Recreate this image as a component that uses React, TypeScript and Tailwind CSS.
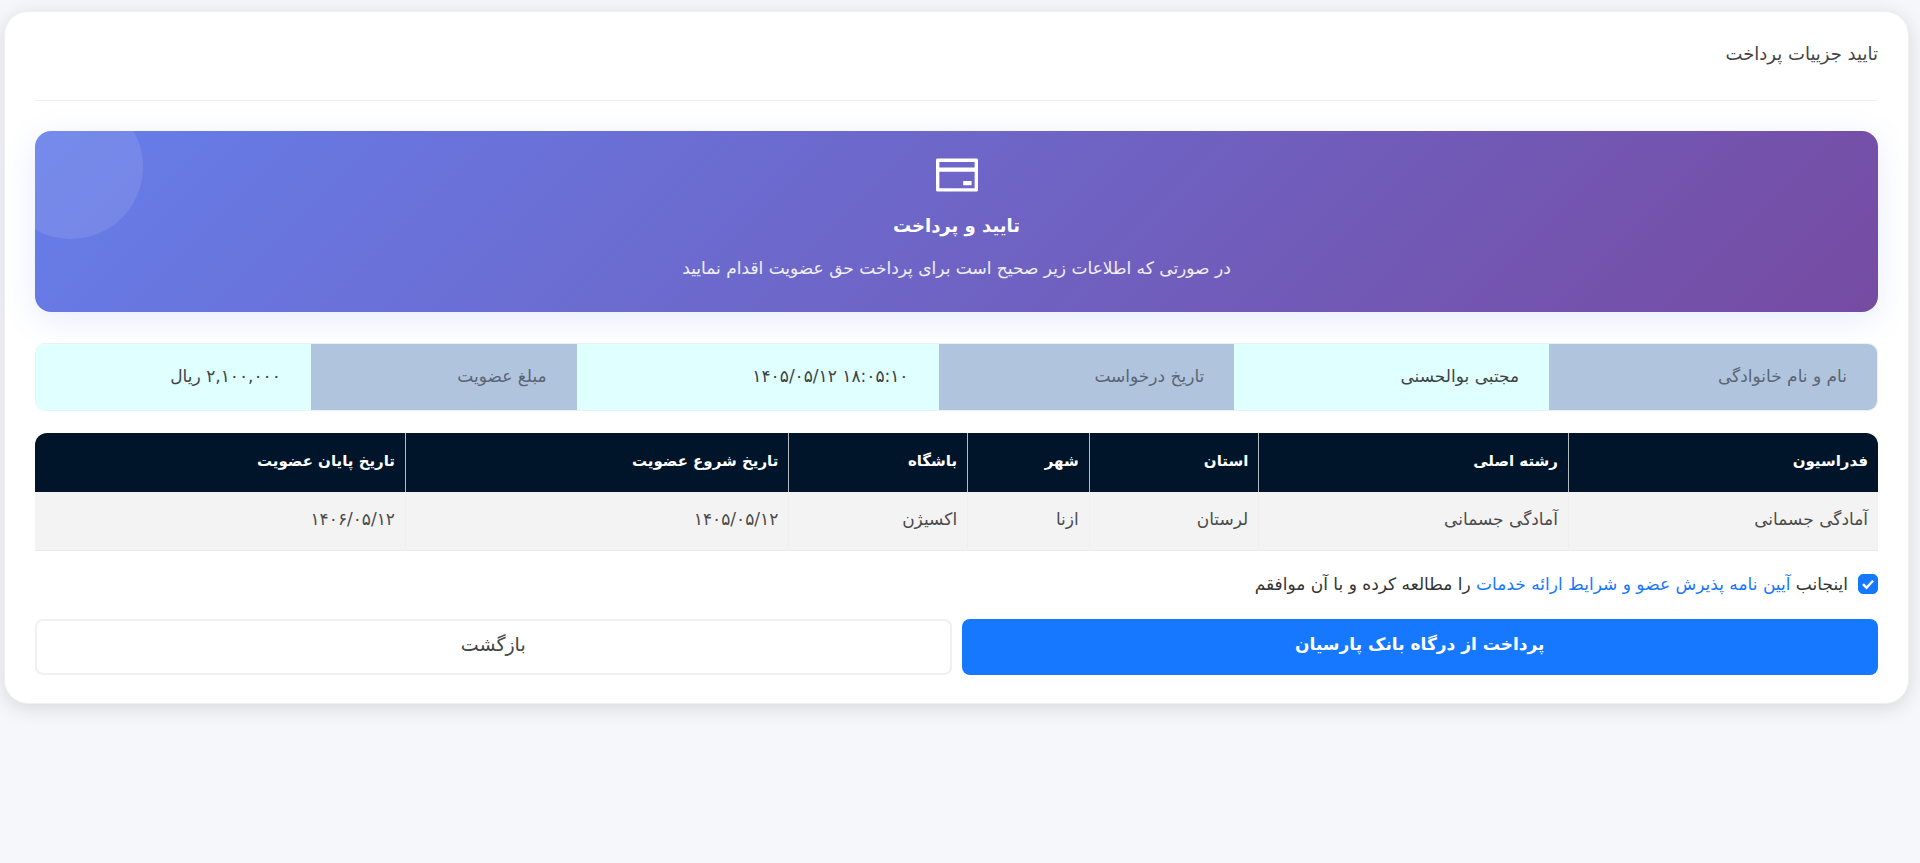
import { AiOutlineCreditCard } from "react-icons/ai";

const details = [
  { label: "نام و نام خانوادگی", value: "مجتبی بوالحسنی" },
  { label: "تاریخ درخواست", value: "۱۴۰۵/۰۵/۱۲ ۱۸:۰۵:۱۰", ltr: true },
  { label: "مبلغ عضویت", value: "۲,۱۰۰,۰۰۰ ریال" },
];

const columns = [
  { title: "فدراسیون", value: "آمادگی جسمانی", width: "w-[16.8%]" },
  { title: "رشته اصلی", value: "آمادگی جسمانی", width: "w-[16.8%]" },
  { title: "استان", value: "لرستان", width: "w-[9.2%]" },
  { title: "شهر", value: "ازنا", width: "w-[6.6%]" },
  { title: "باشگاه", value: "اکسیژن", width: "w-[9.7%]" },
  { title: "تاریخ شروع عضویت", value: "۱۴۰۵/۰۵/۱۲", width: "w-[20.8%]" },
  { title: "تاریخ پایان عضویت", value: "۱۴۰۶/۰۵/۱۲", width: "w-[20.1%]" },
];

function Banner() {
  return (
    <section className="relative flex flex-col items-center overflow-hidden rounded-2xl bg-[linear-gradient(135deg,#667eea_0%,#764ba2_100%)] px-6 pt-5 pb-7 text-white">
      <span className="absolute -top-9 -left-9 size-36 rounded-full bg-white/10" />
      <AiOutlineCreditCard className="size-12" />
      <h2 className="mt-[11px] text-lg leading-8 font-bold">تایید و پرداخت</h2>
      <p className="mt-[10px] text-[17px] leading-8 text-white/90">
        در صورتی که اطلاعات زیر صحیح است برای پرداخت حق عضویت اقدام نمایید
      </p>
    </section>
  );
}

function Details() {
  return (
    <dl className="mt-[31px] grid grid-cols-[328fr_315fr_296fr_362fr_266fr_275fr] overflow-hidden rounded-[10px] border border-[#e6f2f4] text-[17px] leading-8">
      {details.map((d) => (
        <div key={d.label} className="contents">
          <dt className="bg-[#b0c4de] px-[30px] pt-4 pb-[18px] text-[#5b6575]">{d.label}</dt>
          <dd className="bg-[#e0ffff] px-[30px] pt-4 pb-[18px] text-[#3c4444]">
            <span dir={d.ltr ? "ltr" : "rtl"}>{d.value}</span>
          </dd>
        </div>
      ))}
    </dl>
  );
}

function MembershipTable() {
  return (
    <div className="mt-[22px] overflow-hidden rounded-t-xl">
      <table className="w-full table-fixed border-collapse text-right leading-6">
        <thead className="bg-[#001529] text-[15px] text-white">
          <tr>
            {columns.map((c) => (
              <th
                key={c.title}
                className={`${c.width} h-[59px] border-l border-[#b4bbc2] px-[10px] pb-1 font-bold whitespace-nowrap last:border-l-0`}
              >
                {c.title}
              </th>
            ))}
          </tr>
        </thead>
        <tbody className="bg-[#f3f3f3] text-[17px] text-[#4a4a4a]">
          <tr className="border-b border-[#e8e8e8]">
            {columns.map((c) => (
              <td key={c.title} className="h-[58px] border-l border-[#efefef] px-[10px] pb-1 last:border-l-0">
                {c.value}
              </td>
            ))}
          </tr>
        </tbody>
      </table>
    </div>
  );
}

export default function App() {
  return (
    <div
      dir="rtl"
      className="min-h-screen bg-[#f6f7fa] pt-[11px] pr-[11px] pl-1 font-['DejaVu_Sans',sans-serif]"
    >
      <main className="rounded-3xl border border-[#f0f0f0] bg-white px-[30px] pb-7 shadow-[0_4px_20px_rgba(0,0,0,0.13)]">
        <header className="mb-[30px] border-b border-[#f0f0f0] pt-6 pb-7">
          <h1 className="text-lg leading-9 text-[#444]">تایید جزییات پرداخت</h1>
        </header>
        <div className="rounded-2xl shadow-[0_8px_32px_rgba(102,126,234,0.15)]">
          <Banner />
        </div>
        <Details />
        <MembershipTable />
        <label className="mt-[17px] flex items-center gap-[10px] text-[17px] leading-8 text-[#333]">
          <span className="relative flex size-5">
            <input
              type="checkbox"
              defaultChecked
              className="peer size-5 appearance-none rounded-[5px] border border-[#d9d9d9] bg-white checked:border-[#1677ff] checked:bg-[#1677ff]"
            />
            <svg
              viewBox="0 0 20 20"
              className="pointer-events-none absolute inset-0 hidden size-5 peer-checked:block"
              fill="none"
              stroke="white"
              strokeWidth="2.4"
            >
              <path d="M5 10.2l3.5 3.5 6.5-7" />
            </svg>
          </span>
          <span>
            اینجانب{" "}
            <a href="#terms" className="text-[#1677ff]">
              آیین نامه پذیرش عضو و شرایط ارائه خدمات
            </a>{" "}
            را مطالعه کرده و با آن موافقم
          </span>
        </label>
        <div className="mt-[19px] grid grid-cols-2 gap-[10px]">
          <button
            type="button"
            className="h-14 rounded-lg bg-[#1677ff] pb-1 text-[17px] font-bold text-white"
          >
            پرداخت از درگاه بانک پارسیان
          </button>
          <button
            type="button"
            className="h-14 rounded-lg border-2 border-[#f0f0f0] bg-white pb-1 text-[19px] text-[#444]"
          >
            بازگشت
          </button>
        </div>
      </main>
    </div>
  );
}
